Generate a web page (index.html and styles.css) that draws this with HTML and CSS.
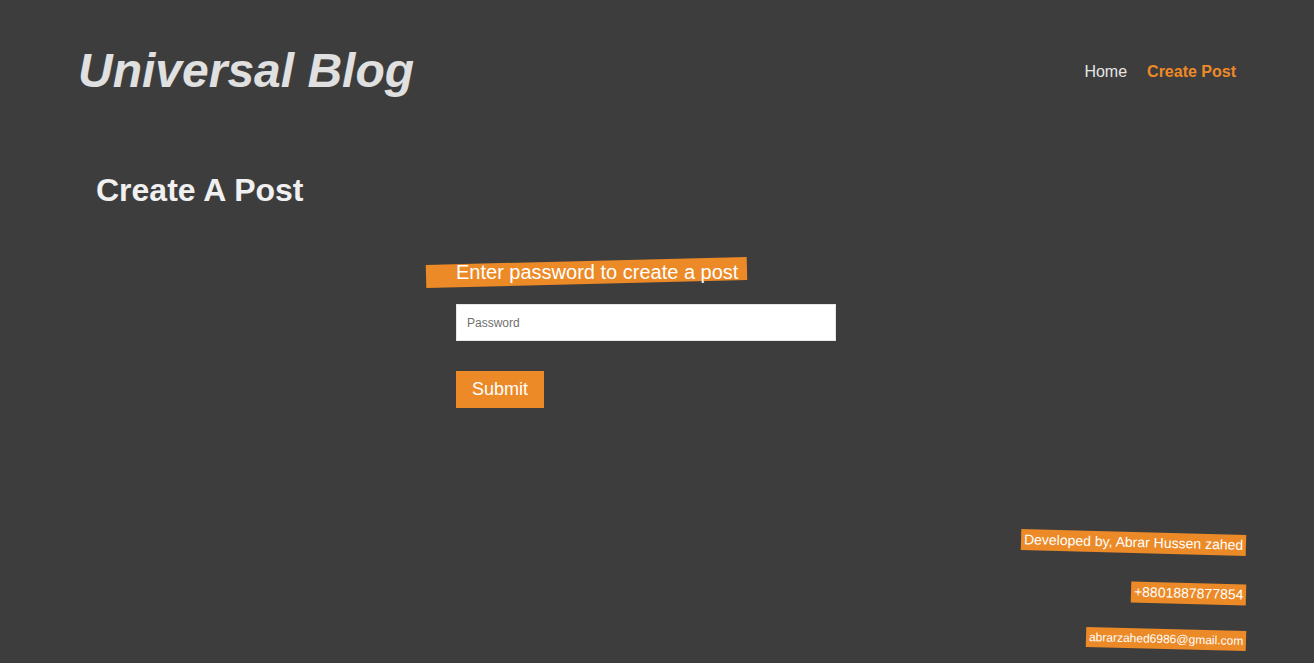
FILE: index.html
```html
<!DOCTYPE html>
<html lang="en">
<head>
<meta charset="utf-8">
<title>Universal Blog</title>
<link rel="stylesheet" href="styles.css">
</head>
<body>
<header class="site-header">
  <h1 class="logo">Universal Blog</h1>
  <nav class="nav">
    <a class="nav-link" href="#">Home</a>
    <a class="nav-link active" href="#">Create Post</a>
  </nav>
</header>
<main class="main">
  <h2 class="page-title">Create A Post</h2>
  <form class="auth-form">
    <h3 class="auth-label">Enter password to create a post</h3>
    <input class="auth-input" type="password" placeholder="Password">
    <button class="auth-submit" type="button">Submit</button>
  </form>
</main>
<footer class="site-footer">
  <p class="tag tag-dev">Developed by, Abrar Hussen zahed</p>
  <p class="tag tag-phone">+8801887877854</p>
  <p class="tag tag-mail">abrarzahed6986@gmail.com</p>
</footer>
</body>
</html>
```

FILE: styles.css
```css
* { box-sizing: border-box; }

html, body {
  margin: 0;
  padding: 0;
}

body {
  background: #3d3d3d;
  font-family: "Liberation Sans", Arial, sans-serif;
  color: #e6e6e6;
  min-height: 663px;
  overflow: hidden;
}

.site-header {
  display: flex;
  justify-content: space-between;
  align-items: center;
  padding: 43px 77px 0 78px;
}

.logo {
  margin: 0;
  font-size: 48px;
  font-style: italic;
  font-weight: 700;
  color: #e0e0e0;
  line-height: 56px;
}

.nav {
  display: flex;
  gap: 20px;
  margin-top: 2px;
  margin-right: 1px;
}

.nav-link {
  text-decoration: none;
  font-size: 16px;
  color: #e6e6e6;
}

.nav-link.active {
  color: #ee8a27;
  font-weight: 700;
}

.main {
  padding: 0 0 0 96px;
}

.page-title {
  margin: 73px 0 0 0;
  font-size: 32px;
  font-weight: 700;
  color: #f0f0f0;
  line-height: 37px;
}

.auth-form {
  display: flex;
  flex-direction: column;
  align-items: flex-start;
  margin: 52px 0 0 360px;
}

.auth-label {
  position: relative;
  margin: 0;
  font-size: 20px;
  font-weight: 400;
  color: #ffffff;
  line-height: 23px;
  z-index: 0;
}

.auth-label::before {
  content: "";
  position: absolute;
  left: -30px;
  right: -9px;
  top: 0;
  bottom: 0;
  background: #ec8a28;
  transform: rotate(-1.4deg);
  z-index: -1;
}

.auth-input {
  margin-top: 20px;
  width: 380px;
  height: 37px;
  border: 1px solid #e6e6e6;
  background: #ffffff;
  padding: 0 10px;
  font-family: "Liberation Sans", Arial, sans-serif;
  font-size: 12px;
  outline: none;
}

.auth-input::placeholder {
  color: #6f6f6f;
}

.auth-submit {
  margin-top: 30px;
  width: 88px;
  height: 37px;
  border: none;
  background: #ec8a28;
  color: #ffffff;
  font-family: "Liberation Sans", Arial, sans-serif;
  font-size: 18px;
  padding: 0;
  cursor: pointer;
}

.site-footer {
  display: flex;
  flex-direction: column;
  align-items: flex-end;
  padding: 124px 68px 0 0;
}

.tag {
  margin: 0;
  background: #ec8a28;
  color: #ffffff;
  transform: rotate(1.5deg);
  line-height: 21px;
  padding: 0 3px;
}

.tag-dev { font-size: 14px; }
.tag-phone { font-size: 14px; margin-top: 30px; }
.tag-mail { font-size: 12px; line-height: 20px; margin-top: 25px; }
```
